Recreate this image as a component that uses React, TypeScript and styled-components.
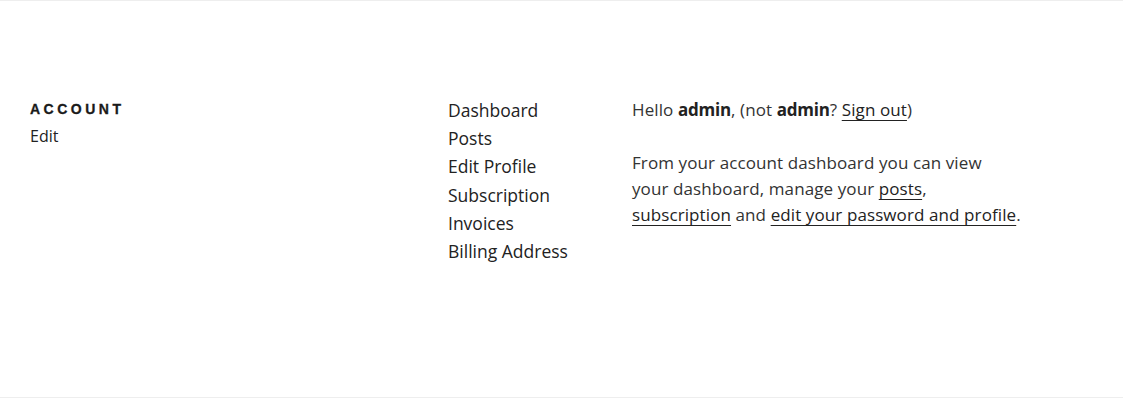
import React from "react";
import styled, { createGlobalStyle } from "styled-components";

const Global = createGlobalStyle`
  html, body { margin: 0; padding: 0; background: #fff; }
  body { font-family: "Open Sans", "Noto Sans", sans-serif; color: #333; }
`;

const Page = styled.div`
  border-top: 1px solid #eee;
  border-bottom: 1px solid #eee;
  height: 396px;
  box-sizing: content-box;
`;

const Wrap = styled.div`
  display: grid;
  grid-template-columns: 418px 184px 420px;
  padding: 95px 0 0 30px;
`;

const Header = styled.header`
  display: flex;
  flex-direction: column;
  align-items: flex-start;
  padding-top: 1px;
`;

const Title = styled.h2`
  margin: 0;
  font-family: "Liberation Sans", Arial, sans-serif;
  font-size: 14px;
  font-weight: 700;
  letter-spacing: 0.25em;
  text-transform: uppercase;
  color: #1a1a1a;
  line-height: 24px;
  -webkit-text-stroke: 0.3px #1a1a1a;
`;

const EditLink = styled.a`
  font-size: 16px;
  color: #222;
  text-decoration: none;
  line-height: 20px;
  margin-top: 5px;
`;

const Nav = styled.ul`
  list-style: none;
  margin: 0;
  padding: 0;
`;

const NavItem = styled.li`
  font-size: 17.5px;
  line-height: 28.2px;
  color: #222;
`;

const Content = styled.div`
  font-size: 17px;
  line-height: 26px;
  letter-spacing: 0.1px;
  color: #333;
  padding-top: 1px;
`;

const Para = styled.p`
  margin: 0 0 27px;
`;

const Link = styled.a`
  color: #222;
  text-decoration: underline;
  text-underline-offset: 4px;
  text-decoration-thickness: 1px;
`;

const Strong = styled.strong`
  font-weight: 700;
  letter-spacing: -0.2px;
  color: #222;
`;

export default function App() {
  const items = ["Dashboard", "Posts", "Edit Profile", "Subscription", "Invoices", "Billing Address"];
  return (
    <>
      <Global />
      <Page>
        <Wrap>
          <Header>
            <Title>Account</Title>
            <EditLink href="#">Edit</EditLink>
          </Header>
          <Nav>
            {items.map((i) => (
              <NavItem key={i}>{i}</NavItem>
            ))}
          </Nav>
          <Content>
            <Para>
              Hello <Strong>admin</Strong>, (not <Strong>admin</Strong>? <Link href="#">Sign out</Link>)
            </Para>
            <Para>
              From your account dashboard you can view
              <br />
              your dashboard, manage your <Link href="#">posts</Link>,
              <br />
              <Link href="#">subscription</Link> and <Link href="#">edit your password and profile</Link>.
            </Para>
          </Content>
        </Wrap>
      </Page>
    </>
  );
}
